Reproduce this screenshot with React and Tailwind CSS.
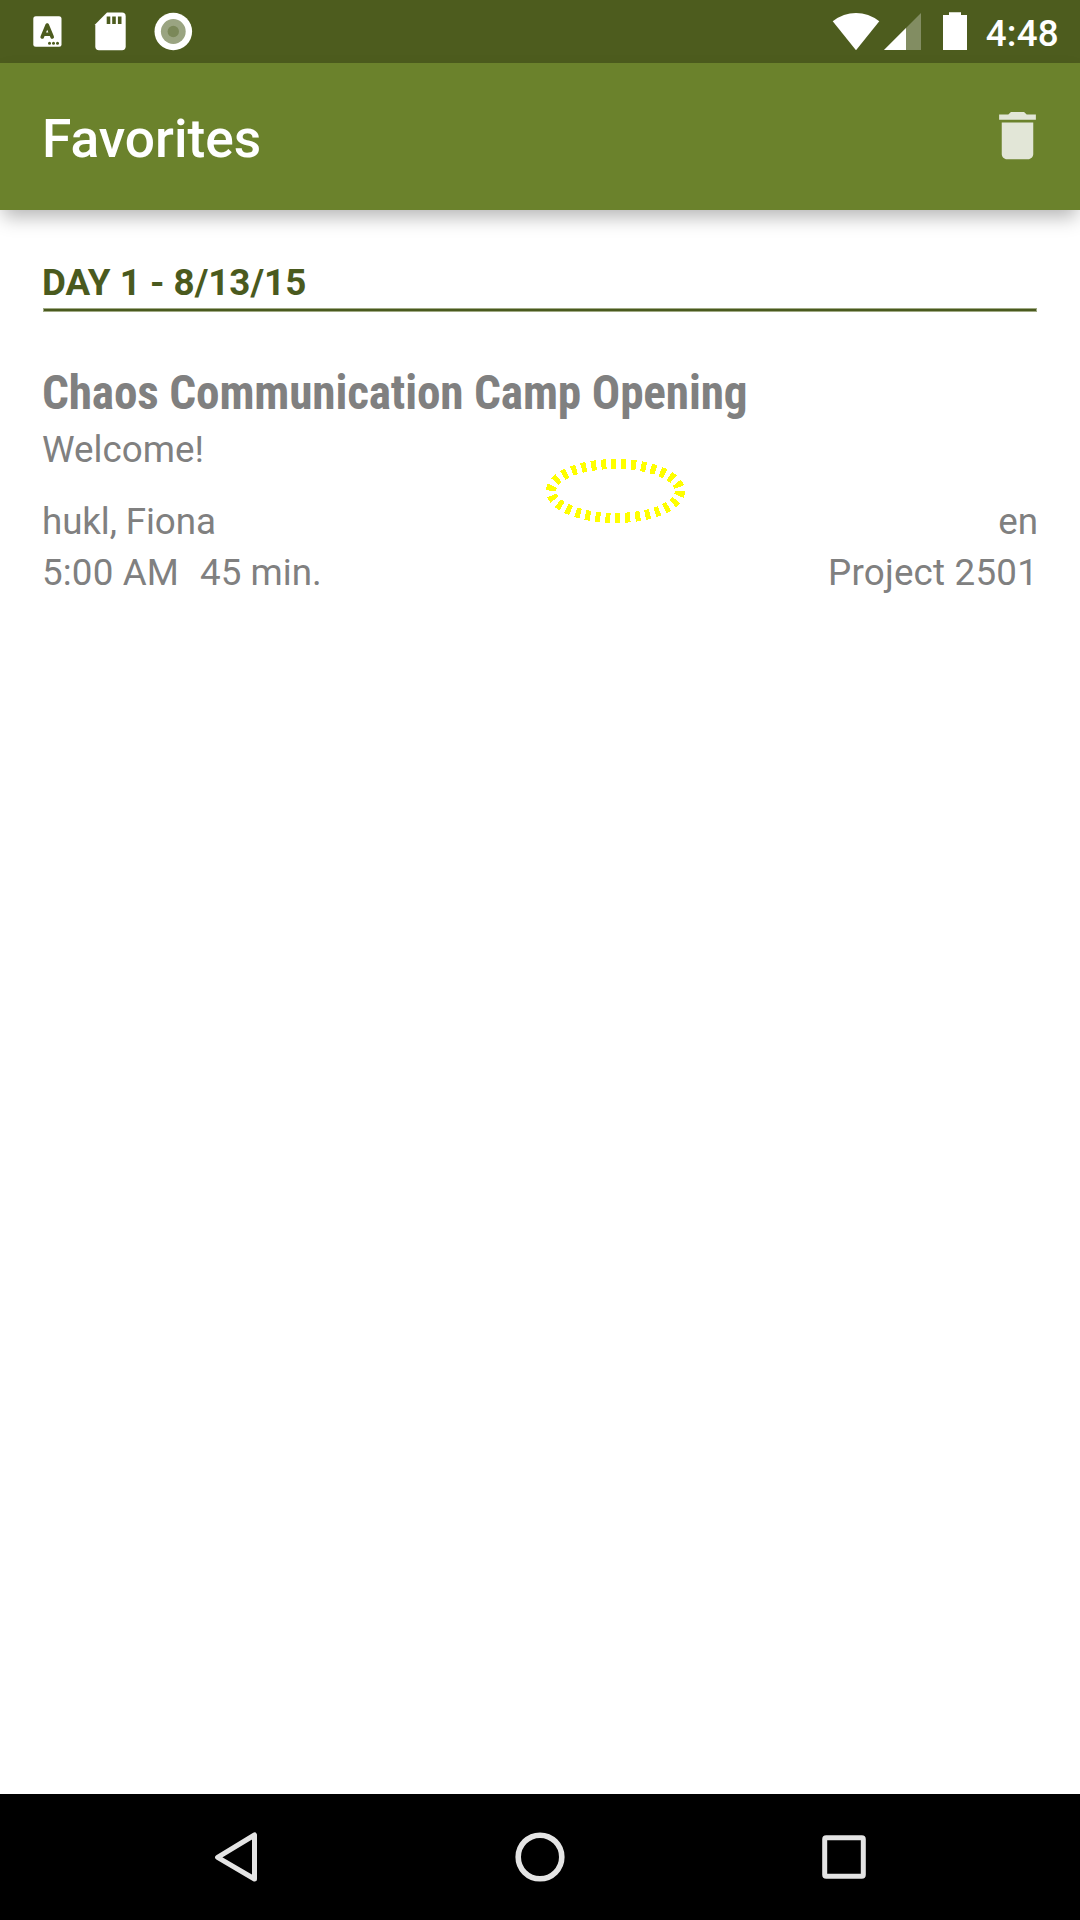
const ALERT_DOTS = [49.5, 53.5, 57.5];

function StatusBar() {
  return (
    <div className="flex h-[63px] items-start justify-between bg-[#4d5c1e]">
      <svg className="h-[63px] w-[210px]" viewBox="0 0 210 63">
        <rect x="33.3" y="16.2" width="28.2" height="30.6" rx="2.5" fill="#fff" />
        <path d="M42.2 37 L47.2 25 L52.2 37 M44.6 34.2 H49.8" fill="none" stroke="#4d5c1e" strokeWidth="3.6" strokeLinecap="round" strokeLinejoin="round" />
        {ALERT_DOTS.map((x) => (
          <circle key={x} cx={x} cy="43.2" r="1.5" fill="#4d5c1e" />
        ))}
        <path d="M107 12.6 H122 Q125.7 12.6 125.7 16.3 V46.6 Q125.7 50.3 122 50.3 H99 Q95.3 50.3 95.3 46.6 V24.3 Z" fill="#fff" />
        <path d="M106.7 16.5h3.6v7.4h-3.6zM112.2 16.5h3.6v7.4h-3.6zM117.9 16.5h3.6v7.4h-3.6z" fill="#4d5c1e" />
        <circle cx="173.3" cy="31.5" r="18.8" fill="#fff" />
        <circle cx="173.3" cy="31.5" r="12.4" fill="#9aa481" />
        <circle cx="173.3" cy="31.5" r="5.7" fill="#7b8859" />
      </svg>
      <div className="flex pr-[21px]">
        <svg className="h-[63px] w-[150px]" viewBox="0 0 150 63">
          <path d="M2.7 21.2 Q13.5 13 26 13 Q38.5 13 49.3 21.2 L26 50.2 Z" fill="#fff" />
          <path d="M91 13 V50 H54 Z" fill="#828d62" />
          <path d="M76 28 V50 H54 Z" fill="#fff" />
          <path d="M119 12.2h12v2.8h6v35h-24V15h6z" fill="#fff" />
        </svg>
        <span className="ml-[6px] mt-[12px] text-[36.75px] font-medium leading-[43px] tracking-[0.25px] text-white">4:48</span>
      </div>
    </div>
  );
}

function AppBar() {
  return (
    <header className="relative z-10 flex h-[147px] items-center justify-between bg-[#6b822c] pl-[42px] pr-[31px] shadow-[0_10px_18px_-3px_rgba(0,0,0,0.29)]">
      <h1 className="mt-[5px] text-[53.3px] font-medium leading-[62px] text-white">Favorites</h1>
      <svg className="-mt-[2px] h-[63px] w-[63px]" viewBox="0 0 24 24" fill="#e2e6d7">
        <path d="M6 19c0 1.1.9 2 2 2h8c1.1 0 2-.9 2-2V7H6v12zM19 4h-3.5l-1-1h-5l-1 1H5v2h14V4z" />
      </svg>
    </header>
  );
}

function FocusRing() {
  return (
    <svg className="absolute left-[545px] top-[248px] h-[66px] w-[141px]" viewBox="0 0 141 66">
      <ellipse cx="70.5" cy="33" rx="64.5" ry="27" fill="none" stroke="#ff0" strokeWidth="10" strokeDasharray="5 5" shapeRendering="crispEdges" />
    </svg>
  );
}

function NavBar() {
  return (
    <nav className="flex h-[126px] items-center justify-center bg-black">
      <svg className="h-[126px] w-[700px]" viewBox="190 0 700 126" fill="none" stroke="#e4e4e4" strokeLinejoin="round">
        <path d="M254.5 41 V85 L217.6 63.3 Z" strokeWidth="5" />
        <circle cx="540" cy="63" r="21.8" strokeWidth="5.6" />
        <rect x="824.7" y="43.7" width="38.6" height="38.6" rx="1.5" strokeWidth="5" />
      </svg>
    </nav>
  );
}

export default function App() {
  return (
    <div className="flex h-[1920px] w-[1080px] flex-col overflow-hidden bg-white font-['Roboto',sans-serif]">
      <StatusBar />
      <AppBar />
      <main className="relative flex-1 px-[42px] pt-[51px]">
        <h2 className="text-[36.75px] font-bold leading-[43px] text-[#4a5a1e]">DAY 1 - 8/13/15</h2>
        <div className="ml-px mt-[4px] h-[4px] w-[994px] border border-[#a0aa85] bg-[#4a5a1e]" />
        <div className="mt-[53px] text-[#808080]">
          <h3 className="font-['Roboto_Condensed','Roboto',sans-serif] text-[47.25px] font-bold leading-[56px] tracking-[-0.16px] [font-stretch:75%]">
            Chaos Communication Camp Opening
          </h3>
          <p className="mt-[7px] text-[36.75px] leading-[43px]">Welcome!</p>
          <div className="mt-[29px] flex justify-between text-[36.75px] leading-[43px]">
            <span className="tracking-[-0.1px]">hukl, Fiona</span>
            <span>en</span>
          </div>
          <div className="mt-[8px] flex justify-between text-[36.75px] leading-[43px]">
            <span className="flex gap-[21px]">
              <span className="tracking-[0.15px]">5:00 AM</span>
              <span>45 min.</span>
            </span>
            <span className="tracking-[0.2px]">Project 2501</span>
          </div>
        </div>
        <FocusRing />
      </main>
      <NavBar />
    </div>
  );
}
